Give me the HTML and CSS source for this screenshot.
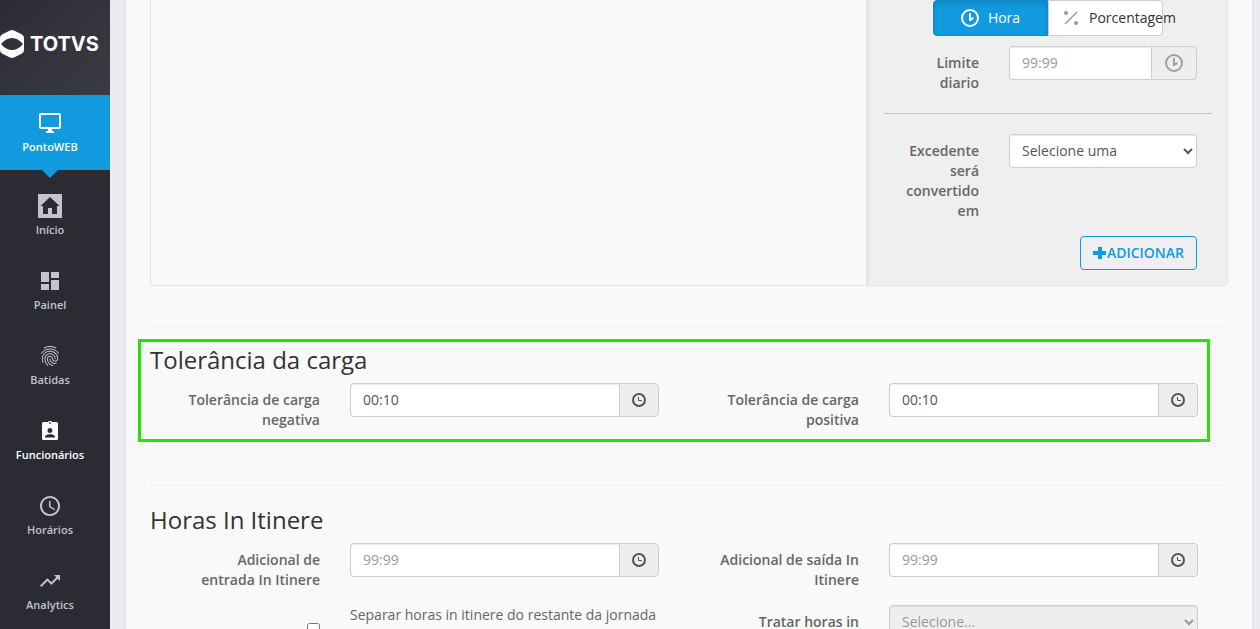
FILE: index.html
```html
<!DOCTYPE html>
<html lang="pt-BR">
<head>
    <meta charset="UTF-8">
    <meta name="viewport" content="width=device-width, initial-scale=1.0">
    <title>PontoWEB</title>
    <link rel="stylesheet" href="styles.css">
</head>

<body>

    <!-- shared icons -->
    <svg class="sprite" aria-hidden="true">
        <symbol id="clock" viewBox="0 0 14 14">
            <circle cx="7" cy="7" r="6" fill="none" stroke="currentColor" stroke-width="2"/>
            <path d="M6.500 4v3.500H10" fill="none" stroke="currentColor" stroke-width="1"/>
        </symbol>
        <symbol id="clock-big" viewBox="0 0 18 18">
            <circle cx="9" cy="9" r="8" fill="none" stroke="currentColor" stroke-width="2"/>
            <path d="M8 4h2v5l2.500-1v2L9.500 12H8z" fill="currentColor"/>
        </symbol>
    </svg>

    <nav class="sidebar">
        <a class="logo" href="#">
            <svg class="logo-mark" viewBox="0 0 24 28" aria-hidden="true">
                <path fill="#fff" fill-rule="evenodd" d="M10 .5Q12 -.4 14 .5L22 4.500Q24 5.500 24 8V20Q24 22.500 22 23.500L14 27.500Q12 28.400 10 27.500L2 23.500Q0 22.500 0 20V8Q0 5.500 2 4.500ZM1 14Q6 20 12 20T23 14Q18 8 12 8T1 14Z"/>
            </svg>
            <span>TOTVS</span>
        </a>

        <a class="item current" href="#">
            <svg viewBox="0 0 24 24"><path d="M21 2H3c-1.100 0-2 .9-2 2v12c0 1.100.9 2 2 2h7v2H8v2h8v-2h-2v-2h7c1.100 0 2-.9 2-2V4c0-1.100-.9-2-2-2zm0 14H3V4h18v12z"/></svg>
            PontoWEB
        </a>

        <div class="menu">
            <a class="item" href="#">
                <svg viewBox="0 0 24 24"><path fill-rule="evenodd" d="M0 0h24v24H0zM12 3L2.500 12H5v8h5v-6h4v6h5v-8h2.500z"/></svg>
                Início
            </a>
            <a class="item" href="#">
                <svg viewBox="0 0 24 24"><path d="M3 13h8V3H3v10zm0 8h8v-6H3v6zm10 0h8V11h-8v10zm0-18v6h8V3h-8z"/></svg>
                Painel
            </a>
            <a class="item" href="#">
                <svg viewBox="0 0 24 24"><path d="M17.810 4.470c-.08 0-.16-.02-.23-.06C15.660 3.420 14 3 12.010 3c-1.980 0-3.860.47-5.570 1.410-.24.13-.54.04-.68-.2-.13-.24-.04-.55.2-.68C7.820 2.520 9.860 2 12.010 2c2.130 0 3.990.47 6.030 1.520.25.13.34.43.21.67-.09.18-.26.28-.44.28zM3.500 9.720c-.1 0-.2-.03-.29-.09-.23-.16-.28-.47-.12-.7.99-1.400 2.250-2.500 3.750-3.270C9.980 4.040 14 4.030 17.150 5.650c1.500.77 2.760 1.860 3.750 3.250.16.22.11.54-.12.7-.23.16-.54.11-.7-.12-.9-1.260-2.040-2.250-3.390-2.940-2.870-1.470-6.540-1.470-9.400.01-1.360.7-2.500 1.700-3.400 2.960-.08.14-.23.21-.39.21zm6.250 12.070c-.13 0-.26-.05-.35-.15-.87-.87-1.340-1.430-2.010-2.640-.69-1.230-1.050-2.730-1.050-4.340 0-2.970 2.540-5.390 5.660-5.390s5.660 2.420 5.660 5.390c0 .28-.22.5-.5.5s-.5-.22-.5-.5c0-2.420-2.090-4.390-4.660-4.390-2.570 0-4.660 1.970-4.660 4.390 0 1.440.32 2.770.93 3.850.64 1.150 1.080 1.640 1.850 2.420.19.2.19.51 0 .71-.11.1-.24.15-.37.15zm7.170-1.850c-1.190 0-2.240-.3-3.100-.89-1.490-1.010-2.380-2.650-2.380-4.390 0-.28.22-.5.5-.5s.5.22.5.5c0 1.410.72 2.740 1.940 3.560.71.48 1.540.71 2.540.71.24 0 .64-.03 1.040-.1.27-.05.53.13.58.41.05.27-.13.53-.41.58-.57.11-1.070.12-1.210.12zM14.910 22c-.04 0-.09-.01-.13-.02-1.590-.44-2.630-1.030-3.720-2.100-1.400-1.390-2.170-3.240-2.170-5.220 0-1.620 1.380-2.940 3.080-2.940 1.700 0 3.080 1.320 3.080 2.940 0 1.070.93 1.940 2.080 1.940s2.080-.87 2.080-1.940c0-3.770-3.250-6.830-7.250-6.830-2.840 0-5.440 1.580-6.610 4.030-.39.81-.59 1.760-.59 2.800 0 .78.07 2.010.67 3.610.1.26-.03.55-.29.64-.26.1-.55-.04-.64-.29-.49-1.310-.73-2.610-.73-3.960 0-1.200.23-2.290.68-3.240 1.330-2.790 4.280-4.600 7.510-4.600 4.550 0 8.250 3.510 8.250 7.830 0 1.620-1.380 2.940-3.080 2.940s-3.080-1.320-3.080-2.940c0-1.070-.93-1.940-2.080-1.940s-2.080.87-2.080 1.940c0 1.710.66 3.310 1.870 4.510.95.94 1.860 1.460 3.270 1.850.27.07.42.35.35.61-.05.23-.26.38-.47.38z"/></svg>
                Batidas
            </a>
            <a class="item active" href="#">
                <svg viewBox="0 0 24 24"><path fill-rule="evenodd" d="M5.500 3H10.500V2h3v1h5Q20 3 20 4.500v15Q20 21 18.500 21h-13Q4 21 4 19.500v-15Q4 3 5.500 3zM11.300 3.200v1.800h1.400V3.200zM12 9a2.500 2.500 0 1 0 0 5 2.500 2.500 0 0 0 0-5zM7 18.500h10v-.7c0-1.700-3-2.600-5-2.600s-5 .9-5 2.600z"/></svg>
                Funcionários
            </a>
            <a class="item" href="#">
                <svg viewBox="0 0 24 24"><path d="M11.990 2C6.470 2 2 6.480 2 12s4.470 10 9.990 10C17.520 22 22 17.520 22 12S17.520 2 11.990 2zM12 20c-4.420 0-8-3.580-8-8s3.580-8 8-8 8 3.580 8 8-3.580 8-8 8z"/><path d="M12.500 7H11v6l5.250 3.150.75-1.230-4.500-2.670z"/></svg>
                Horários
            </a>
            <a class="item" href="#">
                <svg viewBox="0 0 24 24"><path d="M16 6l2.290 2.290-4.880 4.880-4-4L2 16.590 3.410 18l6-6 4 4 6.300-6.290L22 12V6z"/></svg>
                Analytics
            </a>
        </div>
    </nav>

    <main class="content">

        <div class="panel">
            <div class="panel-list"></div>
            <form class="panel-side">
                <div class="toggle">
                    <button type="button" class="toggle-btn selected">
                        <svg class="icon-big"><use href="#clock-big"/></svg>
                        Hora
                    </button>
                    <button type="button" class="toggle-btn">
                        <svg class="icon-percent" viewBox="0 0 16 16"><path d="M2 14L14 2" stroke="currentColor" stroke-width="1.500"/><circle cx="3" cy="3" r="2" fill="currentColor"/><circle cx="13" cy="13" r="2" fill="currentColor"/></svg>
                        Porcentagem
                    </button>
                </div>

                <div class="side-field">
                    <label for="limite">Limite diario</label>
                    <div class="group">
                        <input type="text" id="limite" placeholder="99:99">
                        <span class="addon addon-big"><svg class="icon-big"><use href="#clock-big"/></svg></span>
                    </div>
                </div>

                <hr class="side-line">

                <div class="side-field">
                    <label for="excedente">Excedente será convertido em</label>
                    <select id="excedente">
                        <option>Selecione uma</option>
                    </select>
                </div>

                <button type="button" class="add">
                    <svg class="icon-plus" viewBox="0 0 14 14"><path d="M5 1h4v4h4v4H9v4H5V9H0V5h5z" fill="currentColor"/></svg>ADICIONAR
                </button>
            </form>
        </div>

        <hr class="line">

        <section class="section highlight">
            <h2>Tolerância da carga</h2>
            <div class="fields">
                <div class="field">
                    <label for="negativa">Tolerância de carga negativa</label>
                    <div class="group">
                        <input type="text" id="negativa" value="00:10">
                        <span class="addon"><svg class="icon-clock"><use href="#clock"/></svg></span>
                    </div>
                </div>
                <div class="field">
                    <label for="positiva">Tolerância de carga positiva</label>
                    <div class="group">
                        <input type="text" id="positiva" value="00:10">
                        <span class="addon"><svg class="icon-clock"><use href="#clock"/></svg></span>
                    </div>
                </div>
            </div>
        </section>

        <hr class="line">

        <section class="section">
            <h2>Horas In Itinere</h2>
            <div class="fields">
                <div class="field">
                    <label for="entrada">Adicional de entrada&nbsp;In Itinere</label>
                    <div class="group">
                        <input type="text" id="entrada" placeholder="99:99">
                        <span class="addon"><svg class="icon-clock"><use href="#clock"/></svg></span>
                    </div>
                </div>
                <div class="field">
                    <label for="saida">Adicional de saída In Itinere</label>
                    <div class="group">
                        <input type="text" id="saida" placeholder="99:99">
                        <span class="addon"><svg class="icon-clock"><use href="#clock"/></svg></span>
                    </div>
                </div>
                <div class="field check">
                    <div class="check-box"><input type="checkbox" id="separar"></div>
                    <label for="separar">Separar horas in itinere do restante da jornada</label>
                </div>
                <div class="field">
                    <label for="tratar">Tratar horas in</label>
                    <select id="tratar" disabled>
                        <option>Selecione...</option>
                    </select>
                </div>
            </div>
        </section>

    </main>

</body>
</html>
```

FILE: styles.css
```css
* {
    box-sizing: border-box;
}

body {
    display: flex;
    height: 100vh;
    margin: 0;
    overflow: hidden;
    background-color: #ebeaef;
    color: #666;
    font-family: "Open Sans", sans-serif;
    font-size: 14px;
    line-height: 20px;
}

input,
select,
button {
    font-family: inherit;
    font-size: 14px;
    line-height: 20px;
}

hr {
    margin: 0;
    border: 0;
    border-top: 1px solid #eee;
}

.sprite {
    display: none;
}

/* sidebar */
.sidebar {
    flex: 0 0 110px;
    background-color: #2a2b33;
}

.logo {
    display: flex;
    align-items: center;
    gap: 6px;
    height: 95px;
    padding-bottom: 7px;
    background: linear-gradient(135deg, #2c2c35, #3c3b44);
    color: #fff;
    font-family: Inter, sans-serif;
    font-size: 20px;
    font-weight: 700;
    text-decoration: none;
}

.logo-mark {
    flex: none;
    width: 24px;
    height: 28px;
}

.item {
    display: flex;
    flex-direction: column;
    align-items: center;
    height: 75px;
    padding: 16px 10px 0 0;
    color: #c3c3cf;
    font-size: 11px;
    font-weight: 600;
    line-height: 24px;
    text-decoration: none;
}

.item svg {
    width: 24px;
    height: 24px;
    fill: currentColor;
}

.item.current {
    position: relative;
    background-color: #129ade;
    color: #fff;
}

.item.current::after {
    content: "";
    position: absolute;
    top: 100%;
    left: 42px;
    border: 8px solid transparent;
    border-top-color: #129ade;
    border-bottom: 0;
}

.item.active {
    color: #fff;
}

.menu {
    padding-top: 8px;
}

/* content */
.content {
    flex: 1;
    min-width: 0;
    margin: 0 7px 0 15px;
    padding: 0 24px;
    border: solid #e0e0e4;
    border-width: 0 1px;
    background-color: #f9f9f9;
}

.panel {
    display: flex;
    margin-bottom: 40px;
    border: 1px solid #e3e3e3;
    border-top: 0;
    border-radius: 0 0 4px 4px;
}

.panel-list {
    flex: 1;
}

.panel-side {
    flex: 0 0 361px;
    padding: 0 15px 15px;
    border-left: 3px solid #e5e5e5;
    background-color: #efefef;
}

.toggle {
    display: flex;
    width: 230px;
    margin: 0 0 10px 49px;
}

.toggle-btn {
    display: flex;
    flex: none;
    align-items: center;
    justify-content: center;
    gap: 9px;
    width: 50%;
    height: 36px;
    padding: 0;
    border: 1px solid #ccc;
    border-radius: 0 4px 4px 0;
    background-color: #fff;
    color: #333;
}

.toggle-btn:last-child {
    justify-content: flex-start;
    gap: 10px;
    padding-left: 14px;
}

.toggle-btn:last-child svg {
    color: #999;
}

.toggle-btn.selected {
    border-color: #1089c6;
    border-radius: 4px 0 0 4px;
    background-color: #129ade;
    box-shadow: inset 0 3px 5px rgba(0, 0, 0, 0.125);
    color: #fff;
}

.side-field {
    display: grid;
    grid-template-columns: 80px 1fr;
    column-gap: 30px;
    padding: 0 15px;
}

.side-line {
    margin: 20px 0;
    border-color: #c4c4c4;
}

.add {
    display: flex;
    align-items: center;
    justify-content: center;
    height: 34px;
    margin: 15px 15px 0 auto;
    padding: 0 12px;
    border: 1px solid #129ade;
    border-radius: 4px;
    background-color: transparent;
    color: #129ade;
    font-weight: 600;
}

/* form fields */
label {
    padding-top: 7px;
    font-weight: 600;
    text-align: right;
}

.group {
    display: flex;
    height: 34px;
}

input[type="text"],
select {
    width: 100%;
    min-width: 0;
    height: 34px;
    padding: 5px 12px 7px;
    border: 1px solid #ccc;
    border-radius: 4px;
    background-color: #fff;
    box-shadow: inset 0 1px 1px rgba(0, 0, 0, 0.075);
    color: #555;
}

select {
    padding: 5px 8px 7px;
}

select:disabled {
    background-color: #eee;
    color: #999;
    opacity: 1;
}

.group input[type="text"] {
    border-right: 0;
    border-radius: 4px 0 0 4px;
}

input::placeholder {
    color: #999;
}

.addon {
    display: flex;
    flex: 0 0 40px;
    align-items: center;
    justify-content: center;
    border: 1px solid #ccc;
    border-radius: 0 4px 4px 0;
    background-color: #eee;
    color: #555;
}

.addon-big {
    flex-basis: 46px;
    color: #a0a0a0;
}

.icon-clock {
    width: 14px;
    height: 14px;
}

.icon-big {
    flex: none;
    width: 18px;
    height: 18px;
}

.icon-percent {
    flex: none;
    width: 16px;
    height: 16px;
}

.icon-plus {
    width: 14px;
    height: 14px;
}

/* sections */
.section {
    margin: 16px 30px 0 0;
}

.section h2 {
    margin: 0 0 5px;
    color: #333;
    font-size: 24px;
    font-weight: 400;
    line-height: 36px;
}

.highlight {
    margin: 12px 18px 43px -12px;
    padding: 0 9px 9px;
    border: 3px solid #22e600;
}

.fields {
    display: grid;
    grid-template-columns: 1fr 1fr;
    gap: 15px 30px;
}

.field {
    display: grid;
    grid-template-columns: 140px 1fr;
    column-gap: 30px;
    padding-left: 30px;
}

.check label {
    padding-top: 0;
    font-weight: 400;
    text-align: left;
}

.check-box {
    padding-top: 18px;
    text-align: right;
    line-height: 13px;
}

.check-box input {
    display: inline-block;
    width: 13px;
    height: 13px;
    margin: 0;
}
```
